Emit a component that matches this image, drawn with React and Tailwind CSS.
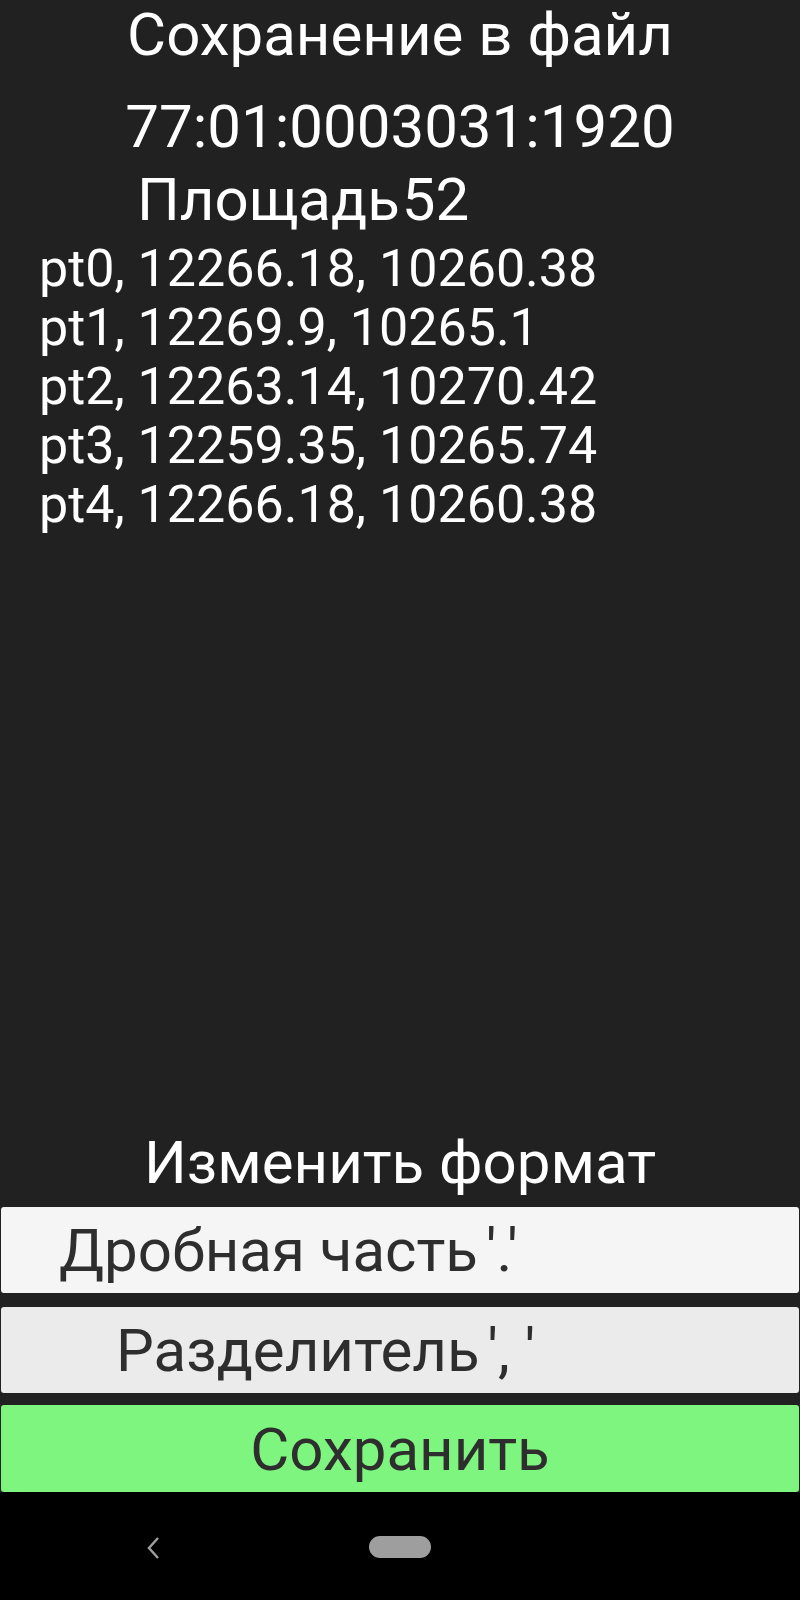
import React from 'react';

const points = [
  'pt0, 12266.18, 10260.38',
  'pt1, 12269.9, 10265.1',
  'pt2, 12263.14, 10270.42',
  'pt3, 12259.35, 10265.74',
  'pt4, 12266.18, 10260.38',
];

const font = { fontFamily: 'Roboto, "Noto Sans", sans-serif' };

export default function App() {
  return (
    <div className="w-[800px] h-[1600px] flex flex-col bg-[#212121] text-white" style={font}>
      <div className="text-center text-[60px] leading-[70px]">Сохранение в файл</div>
      <div className="mt-[22px] text-center text-[60px] leading-[70px]">77:01:0003031:1920</div>
      <div className="mt-[3px] pl-[137px] flex gap-[2px] text-[60px] leading-[70px]">
        <span>Площадь</span>
        <span>52</span>
      </div>
      <div className="mt-[4px] pl-[39px] text-[52px] leading-[59px]">
        {points.map((p) => (
          <div key={p}>{p}</div>
        ))}
      </div>

      <div className="flex-1" />

      <div className="text-center text-[60px] leading-[70px]">Изменить формат</div>
      <div className="mt-[9px] px-[1px] flex flex-col text-[#2e2e2e] text-[60px] leading-[70px]">
        <button className="h-[86px] rounded-[3px] bg-[#f5f5f5] text-left pl-[58px] pt-[2px]">
          Дробная часть<span className="ml-[8px]">'.'</span>
        </button>
        <button className="mt-[14px] h-[86px] rounded-[3px] bg-[#ebebeb] text-left pl-[115px] pt-[2px]">
          Разделитель<span className="ml-[8px]">', '</span>
        </button>
        <button className="mt-[12px] h-[87px] rounded-[3px] bg-[#7ef57e] text-center pt-[2px]">
          Сохранить
        </button>
      </div>

      <div className="h-[108px] bg-black relative">
        <svg className="absolute left-[145px] top-[44px]" width="16" height="24" viewBox="0 0 16 24">
          <polyline points="13,2 4,12 13,22" fill="none" stroke="#9e9e9e" strokeWidth="2.5" />
        </svg>
        <div className="absolute left-[369px] top-[44px] w-[62px] h-[22px] rounded-full bg-[#9e9e9e]" />
      </div>
    </div>
  );
}
